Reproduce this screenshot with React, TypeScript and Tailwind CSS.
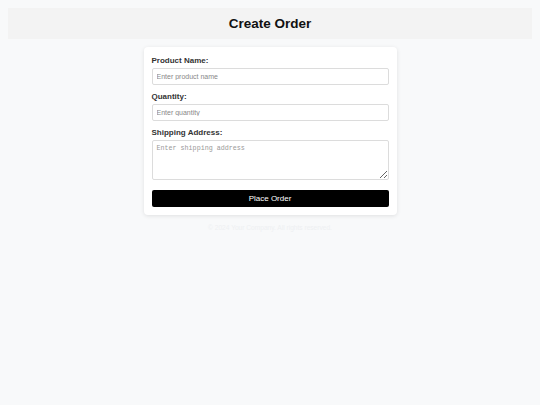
export default function App() {
  return (
    <div className="min-h-screen bg-[#f8f9fa] p-2 font-['Liberation_Sans',Arial,sans-serif]">
      <header className="bg-[#f3f3f3] h-[31px] flex items-center justify-center">
        <h1 className="text-[13.5px] leading-none font-bold text-[#111]">Create Order</h1>
      </header>
      <div className="mx-auto mt-2 w-[253px] bg-white rounded-[4px] shadow-[0_1px_4px_rgba(0,0,0,0.1)] px-2 pt-[9px] pb-2 flex flex-col">
        <label className="block text-[8px] leading-[10px] font-bold text-[#333] mb-[2px]">Product Name:</label>
        <input
          className="h-[17px] w-full border border-[#dcdcdc] rounded-[2px] px-[4px] text-[7px] placeholder:text-[#888] outline-none"
          placeholder="Enter product name"
        />
        <label className="block text-[8px] leading-[10px] font-bold text-[#333] mt-[7px] mb-[2px]">Quantity:</label>
        <input
          className="h-[17px] w-full border border-[#dcdcdc] rounded-[2px] px-[4px] text-[7px] placeholder:text-[#888] outline-none"
          placeholder="Enter quantity"
        />
        <label className="block text-[8px] leading-[10px] font-bold text-[#333] mt-[7px] mb-[2px]">Shipping Address:</label>
        <textarea
          className="h-[40px] w-full border border-[#dcdcdc] rounded-[2px] px-[4px] py-[3px] text-[6.7px] leading-[9px] font-['Liberation_Mono',monospace] placeholder:text-[#999] outline-none resize-y"
          placeholder="Enter shipping address"
        />
        <button className="mt-[10px] h-[17px] w-full bg-black text-white rounded-[2px] text-[8px] leading-none">
          Place Order
        </button>
      </div>
      <p className="text-center text-[6.6px] leading-[8px] text-[#eef0f2] mt-[9px]">© 2024 Your Company. All rights reserved.</p>
    </div>
  );
}
